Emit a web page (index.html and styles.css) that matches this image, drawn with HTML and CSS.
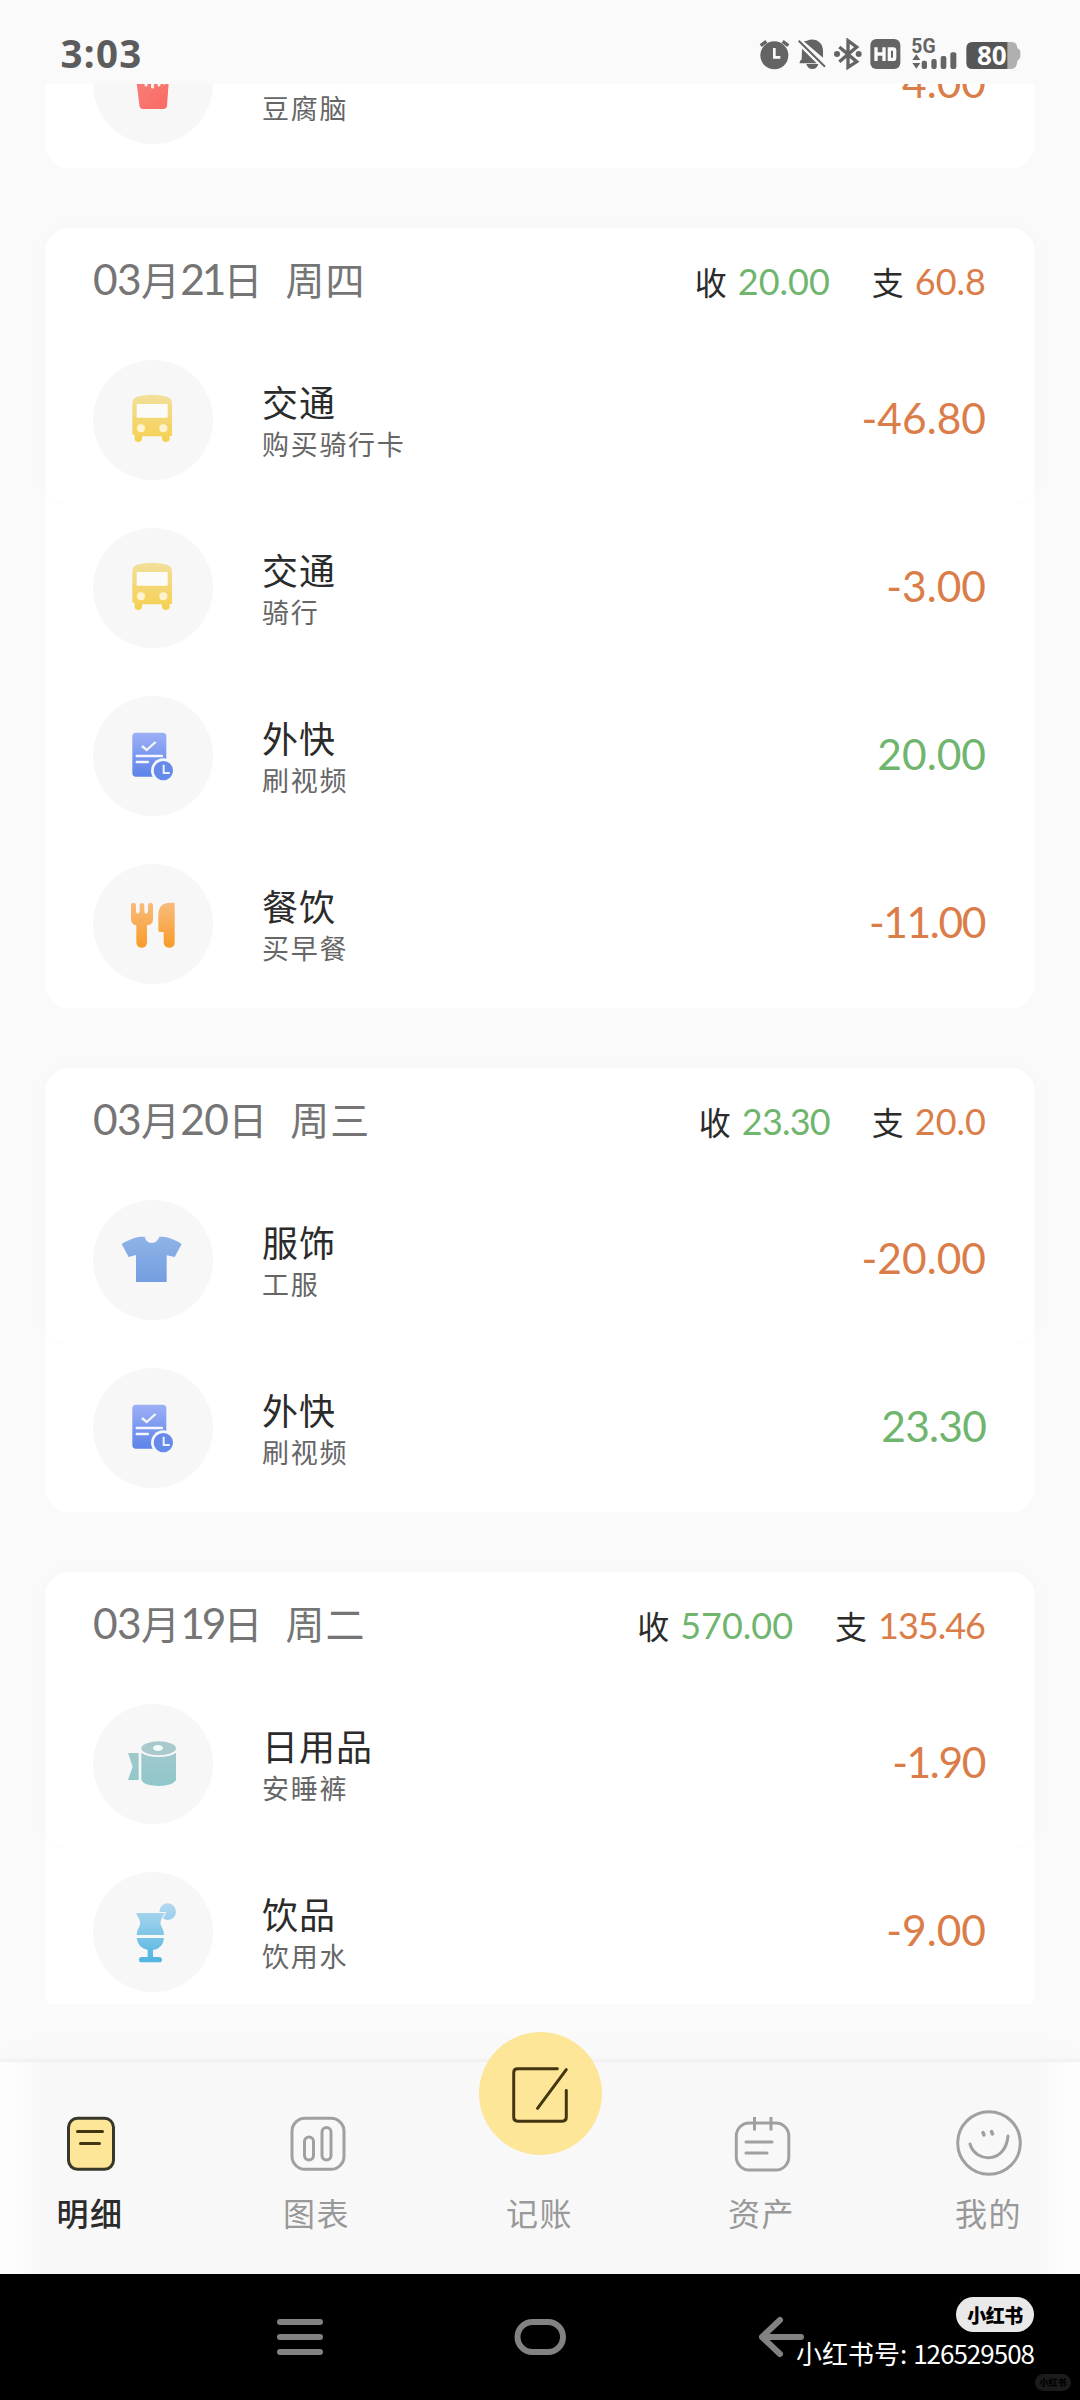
FILE: index.html
```html
<!DOCTYPE html>
<html lang="zh-CN">
<head>
<meta charset="utf-8">
<title>明细</title>
<link rel="stylesheet" href="styles.css">
</head>
<body>
<svg class="defs" width="0" height="0" aria-hidden="true">
  <defs>
    <linearGradient id="gBus" x1="0" y1="0" x2="0" y2="1"><stop offset="0" stop-color="#f3df9b"/><stop offset="1" stop-color="#f5d04f"/></linearGradient>
    <linearGradient id="gBlue" x1="0" y1="0" x2="0" y2="1"><stop offset="0" stop-color="#9db0f5"/><stop offset="1" stop-color="#5c82ea"/></linearGradient>
    <linearGradient id="gFood" gradientUnits="userSpaceOnUse" x1="0" y1="660" x2="0" y2="802"><stop offset="0" stop-color="#f8bd80"/><stop offset="1" stop-color="#f99b26"/></linearGradient>
    <linearGradient id="gShirt" x1="0" y1="0" x2="0" y2="1"><stop offset="0" stop-color="#8fb3e8"/><stop offset="1" stop-color="#749ee0"/></linearGradient>
    <linearGradient id="gRoll" gradientUnits="userSpaceOnUse" x1="0" y1="543" x2="0" y2="680"><stop offset="0" stop-color="#a5c9cd"/><stop offset="1" stop-color="#8fc7ca"/></linearGradient>
    <linearGradient id="gCup" gradientUnits="userSpaceOnUse" x1="0" y1="1030" x2="0" y2="1208"><stop offset="0" stop-color="#b5d9ef"/><stop offset="1" stop-color="#4eb4e0"/></linearGradient>
    <linearGradient id="gFries" x1="0" y1="0" x2="1" y2="1"><stop offset="0" stop-color="#f5807a"/><stop offset="1" stop-color="#fb6a62"/></linearGradient>
    <symbol id="bus" viewBox="160 60 360 360">
      <path fill="url(#gBus)" d="M278 190Q278 175 292 170Q337 159 382 170Q397 175 397 190V288H390V298Q388 306 379 306Q369 306 367 298V289H307V298Q305 306 296 306Q286 306 285 298V286L278 282Z"/>
      <rect x="291" y="192" width="93" height="41" rx="3" fill="#fbfbfa"/>
      <circle cx="304" cy="265" r="12" fill="#fdf4cf"/><circle cx="371" cy="265" r="12" fill="#fdf4cf"/>
    </symbol>
    <symbol id="task" viewBox="160 46 360 360">
      <rect x="278" y="156" width="102" height="132" rx="11" fill="url(#gBlue)"/>
      <path fill="none" stroke="#f4f6fd" stroke-width="7" d="M307 196L321 208L348 184"/>
      <path fill="none" stroke="#f4f6fd" stroke-width="7" stroke-linecap="round" d="M291 226H367M291 244H325"/>
      <circle cx="371" cy="270" r="37" fill="#f7f7f7"/><circle cx="371" cy="270" r="29" fill="#668ae9"/>
      <path fill="none" stroke="#eef2fe" stroke-width="6" d="M372 252V277H390"/>
    </symbol>
    <symbol id="food" viewBox="160 550 360 360">
      <path fill="url(#gFood)" d="M274 672Q275 666 281 666Q288 666 289 673V691Q289 699 295 699Q300 698 300 691V673Q301 667 307 667Q313 667 314 673V691Q314 699 319 699Q324 699 325 691V673Q326 666 333 666Q340 667 340 674V715Q340 733 322 734V784Q322 801 306 801Q290 801 290 784V734Q274 732 274 714ZM356 699Q358 666 393 666H405V786Q404 801 388 801Q373 801 372 785V754H360Q356 754 356 749Z"/>
    </symbol>
    <symbol id="shirt" viewBox="160 420 360 360">
      <path fill="url(#gShirt)" d="M246 552Q272 535 300 530H315Q320 549 337 549Q353 548 359 530H372Q402 535 426 552L405 591L381 586V666H289V585L267 591Z"/>
    </symbol>
    <symbol id="roll" viewBox="160 432 360 360">
      <path fill="url(#gRoll)" d="M265 579H297V660H265L279 620ZM305 578Q323 591 357 591Q391 591 409 578V661Q397 678 357 678Q315 678 305 661Z"/>
      <ellipse cx="357" cy="565" rx="52" ry="21" fill="#a9cacd"/><ellipse cx="355" cy="564" rx="15" ry="9" fill="#f4fbfb"/>
    </symbol>
    <symbol id="cup" viewBox="160 936 360 360">
      <circle cx="384" cy="1055" r="25" fill="url(#gCup)"/>
      <path fill="url(#gCup)" stroke="#f7f7f7" stroke-width="6" paint-order="stroke" d="M290 1059H375Q371 1068 365 1077Q359 1092 366 1100Q372 1110 373 1125H291Q292 1108 300 1097Q304 1088 298 1076Q292 1068 290 1059Z"/>
      <path fill="url(#gCup)" d="M291 1134H373Q370 1166 340 1170V1191H358Q367 1191 367 1199Q367 1207 358 1207H306Q298 1207 298 1199Q298 1191 306 1191H324V1170Q294 1163 291 1134Z"/>
    </symbol>
    <symbol id="fries" viewBox="0 0 120 120">
      <path fill="url(#gFries)" d="M43 54H76L74 82Q73.500 85 70 85H50Q47 85 46.500 82Z"/>
      <path fill="none" stroke="#faf0ea" stroke-width="3" stroke-linecap="round" d="M53 54V61M59.500 54V63M66 54V61M71 54V59"/>
    </symbol>
  </defs>
</svg>

<div class="screen">
  <header class="status">
    <span class="clock">3:03</span>
    <svg class="status-icons" viewBox="176 114 788 96">
      <g fill="#646464">
        <circle cx="222" cy="166" r="42"/>
        <path fill="none" stroke="#646464" stroke-width="10" d="M181 137L198 124M247 124L264 137"/>
        <path fill="none" stroke="#fafafa" stroke-width="8" d="M222 144V172H240"/>
        <path d="M305 146L349 190H298Q296 185 304 178ZM318 123Q342 112 359 128Q368 137 368 154V173L310 124ZM318 192H354Q350 207 336 207Q322 207 318 192Z"/>
        <path stroke="#646464" stroke-width="6" d="M295 122L374 200"/>
        <path fill="none" stroke="#646464" stroke-width="10" d="M417 141L469 185L443 202V122L469 141L417 185"/>
        <circle cx="410" cy="162" r="9"/><circle cx="475" cy="162" r="9"/>
        <rect x="510" y="117" width="90" height="90" rx="18"/>
        <path fill="none" stroke="#fafafa" stroke-width="10" d="M527 142V183M551 142V183M527 162H551M567 147H579Q583 147 583 152V173Q583 178 579 178H567Z"/>
        <path d="M636 180L648 163L660 180ZM636 189L648 206L660 189Z"/>
        <rect x="664" y="182" width="16" height="25" rx="6"/><rect x="693" y="177" width="16" height="30" rx="6"/><rect x="721" y="168" width="17" height="39" rx="6"/><rect x="750" y="157" width="18" height="50" rx="6"/>
        <path fill="#b0b0b0" d="M920 126H934Q950 126 951 145Q960 148 960 158V170Q959 178 951 182Q950 207 932 207H920Z"/>
        <path fill="#565656" d="M817 126H921V207H817Q798 207 798 188V145Q798 126 817 126Z"/>
      </g>
      <text x="633" y="159" class="net">5G</text>
      <text x="830" y="194" class="level">80</text>
    </svg>
  </header>

  <main class="list">
    <section class="day">
      <div class="row"><div class="icon"><svg><use href="#fries"/></svg></div><div class="info"><div class="note only">豆腐脑</div></div><div class="amount out">4.00</div></div>
    </section>

    <section class="day">
      <div class="head">
        <div class="top"><div class="date"><b>03</b>月<b class="narrow">21</b>日<span>周四</span></div><div class="sum">收<em class="in">20.00</em>支<em class="out">60.8</em></div></div>
        <div class="row"><div class="icon"><svg><use href="#bus"/></svg></div><div class="info"><div class="name">交通</div><div class="note">购买骑行卡</div></div><div class="amount out">-46.80</div></div>
      </div>
      <div class="row"><div class="icon"><svg><use href="#bus"/></svg></div><div class="info"><div class="name">交通</div><div class="note">骑行</div></div><div class="amount out">-3.00</div></div>
      <div class="row"><div class="icon"><svg><use href="#task"/></svg></div><div class="info"><div class="name">外快</div><div class="note">刷视频</div></div><div class="amount in">20.00</div></div>
      <div class="row"><div class="icon"><svg><use href="#food"/></svg></div><div class="info"><div class="name">餐饮</div><div class="note">买早餐</div></div><div class="amount out ones">-11.00</div></div>
    </section>

    <section class="day">
      <div class="head">
        <div class="top"><div class="date"><b>03</b>月<b>20</b>日<span>周三</span></div><div class="sum">收<em class="in tight">23.30</em>支<em class="out">20.0</em></div></div>
        <div class="row"><div class="icon"><svg><use href="#shirt"/></svg></div><div class="info"><div class="name">服饰</div><div class="note">工服</div></div><div class="amount out">-20.00</div></div>
      </div>
      <div class="row"><div class="icon"><svg><use href="#task"/></svg></div><div class="info"><div class="name">外快</div><div class="note">刷视频</div></div><div class="amount in tight">23.30</div></div>
    </section>

    <section class="day">
      <div class="head">
        <div class="top"><div class="date"><b>03</b>月<b class="narrow">19</b>日<span>周二</span></div><div class="sum">收<em class="in">570.00</em>支<em class="out tight">135.46</em></div></div>
        <div class="row"><div class="icon"><svg><use href="#roll"/></svg></div><div class="info"><div class="name">日用品</div><div class="note">安睡裤</div></div><div class="amount out ones">-1.90</div></div>
      </div>
      <div class="row"><div class="icon"><svg><use href="#cup"/></svg></div><div class="info"><div class="name">饮品</div><div class="note">饮用水</div></div><div class="amount out">-9.00</div></div>
    </section>
  </main>

  <nav class="tabs">
    <a class="tab active">
      <svg viewBox="0 0 66 68"><rect x="11.500" y="9.300" width="45" height="51" rx="9" fill="#fde698" stroke="#38382a" stroke-width="3"/><path stroke="#423611" stroke-width="3" stroke-linecap="round" d="M20.500 22.500H45.500M23.500 34.500H42.500"/></svg>
      <span>明细</span>
    </a>
    <a class="tab">
      <svg viewBox="0 0 66 68" fill="none" stroke="#a0a0a0" stroke-width="3"><rect x="8" y="9.300" width="52" height="51" rx="13"/><rect x="20.500" y="28" width="9" height="23" rx="4.500"/><rect x="38" y="18.500" width="9" height="32.500" rx="4.500"/></svg>
      <span>图表</span>
    </a>
    <a class="tab">
      <div class="fab"><svg viewBox="0 0 124 124" fill="none" stroke="#423611" stroke-width="3" stroke-linecap="round" stroke-linejoin="round"><path d="M79 37H39Q35 37 35 41V86Q35 90 39 90H84Q88 90 88 86V59M88 38L59 77"/></svg></div>
      <span>记账</span>
    </a>
    <a class="tab">
      <svg viewBox="0 0 66 68" fill="none" stroke="#a0a0a0" stroke-width="3"><rect x="7.300" y="14" width="52.500" height="47" rx="13"/><path d="M25.500 8V21.500M42 8V21.500"/><path stroke-linecap="round" d="M17 33H43M17 44H38"/></svg>
      <span>资产</span>
    </a>
    <a class="tab">
      <svg viewBox="0 0 66 68" fill="none" stroke="#a0a0a0" stroke-width="3" stroke-linecap="round"><circle cx="33" cy="34" r="31.300"/><path d="M14 35C19.500 54 49.500 55 52 27"/><path stroke-width="3.500" d="M27 23.500L28 26M35.500 22.500L36.500 25"/></svg>
      <span>我的</span>
    </a>
  </nav>

  <footer class="system">
    <svg viewBox="0 0 1080 126" fill="none" stroke="#828282" stroke-width="6" stroke-linecap="round" stroke-linejoin="round">
      <path d="M280 48H320M280 63H320M280 78H320"/>
      <rect x="517.500" y="48" width="45.500" height="30" rx="15"/>
      <path d="M801 63H762M780 46L762 63L780 80"/>
    </svg>
    <div class="mark"><span class="badge">小红书</span><span class="uid">小红书号: <b>126529508</b></span></div>
    <span class="badge ghost">小红书</span>
  </footer>
</div>
</body>
</html>
```
FILE: styles.css
```css
* { box-sizing: border-box; }
body {
  margin: 0;
  font-family: "Noto Sans CJK SC", sans-serif;
  background: #fafafa;
}
.defs { display: block; position: absolute; }
em { font-style: normal; }
.screen {
  display: flex;
  flex-direction: column;
  width: 1080px;
  height: 2400px;
  overflow: hidden;
}
.status {
  display: flex;
  justify-content: space-between;
  height: 84px;
  padding: 38px 58.700px 0 60.500px;
}
.clock {
  font: 700 38.500px/31px "Noto Sans", sans-serif;
  letter-spacing: 1.300px;
  color: #5c5c5c;
}
.status-icons { width: 262.700px; height: 32px; }
.net { font: 700 58px "Roboto", sans-serif; fill: #646464; }
.level { font: 700 78px "Noto Sans", sans-serif; fill: #fff; }

/* transaction list */
.list {
  display: flex;
  flex-direction: column;
  gap: 60px;
  height: 1920px;
  padding: 0 45px;
  overflow: hidden;
}
.day { flex: none; background: #fff; border-radius: 24px; }
.day:first-child { margin-top: -84px; }
.head {
  border-radius: 24px;
  background: #fff;
  box-shadow: 0 0 24px rgba(0, 0, 0, .022);
}
.top {
  display: flex;
  justify-content: space-between;
  align-items: center;
  height: 108px;
  padding: 0 49px 0 48px;
}
.date {
  margin-top: -7px;
  font-size: 39px;
  line-height: 60px;
  color: #757575;
  white-space: nowrap;
}
.date b { font: 400 42.500px/60px Lato, sans-serif; letter-spacing: -.6px; }
.date .narrow { letter-spacing: -3px; margin-right: 0; }
.date span { margin-left: 23px; letter-spacing: 1px; }
.sum { font-size: 32px; line-height: 60px; color: #2b2b2b; white-space: nowrap; margin-top: -2px; }
.sum em { font: 400 36px/60px Lato, sans-serif; margin-left: 11px; }
.sum em.in { margin-right: 42px; }
.sum em.tight { letter-spacing: -.8px; }
.sum em.out.tight { letter-spacing: -1px; margin-right: 1px; }
.in, .sum .in { color: #70b56e; }
.out, .sum .out { color: #da7d49; }
.row {
  display: flex;
  align-items: center;
  height: 168px;
  padding: 0 49px 0 48px;
}
.head + .row { background: #fff; }
.head + .row:last-child { border-radius: 0 0 24px 24px; }
.icon {
  width: 120px;
  height: 120px;
  border-radius: 50%;
  background: #f7f7f7;
}
.icon svg { display: block; width: 120px; height: 120px; }
.info { flex: 1; padding: 6px 0 0 49px; }
.name { font-size: 36px; line-height: 42px; letter-spacing: 1px; color: #2b2b2b; }
.note { font-size: 27px; line-height: 44px; letter-spacing: 1.700px; color: #666; }
.note.only { margin-top: 42px; }
.amount { margin-top: -5px; font: 400 42.500px/60px Lato, sans-serif; }
.amount.tight { letter-spacing: -.8px; }
.amount.ones { letter-spacing: -1.400px; margin-right: 1px; }

/* bottom tabs */
.tabs {
  display: grid;
  grid-template-columns: 226.500px 223px 222px 227px 66px;
  height: 212px;
  margin-top: 58px;
  padding: 47px 0 0 57px;
  background: linear-gradient(90deg, #fefefe 0, #f8f8f8 42px, #f8f8f8 1038px, #fefefe 1080px);
  box-shadow: 0 -2px 4px rgba(0, 0, 0, .045), 0 -16px 40px rgba(0, 0, 0, .012);
}
.tab { display: flex; flex-direction: column; align-items: center; width: 66px; }
.tab > svg { width: 66px; height: 68px; flex: none; }
.tab span {
  margin-top: 13px;
  font-size: 32px;
  line-height: 44px;
  letter-spacing: 1.500px;
  white-space: nowrap;
  color: #999;
}
.tab.active span { color: #2b2b2b; font-weight: 500; }
.fab {
  flex: none;
  width: 123px;
  height: 123px;
  margin: -77px 0 22px 2px;
  border-radius: 50%;
  background: #fde698;
}
.fab svg { display: block; width: 123px; height: 123px; }

/* system navigation and account mark */
.system { position: relative; height: 126px; background: #000; }
.system > svg { display: block; width: 1080px; height: 126px; }
.mark {
  position: absolute;
  right: 46px;
  top: 23px;
  display: flex;
  flex-direction: column;
  align-items: flex-end;
}
.badge {
  display: flex;
  align-items: center;
  justify-content: center;
  width: 78px;
  height: 35px;
  border-radius: 18px;
  background: #e9e9e9;
  color: #000;
  font-size: 19px;
  font-weight: 900;
  letter-spacing: -.5px;
}
.uid { margin-top: 2px; font-size: 26px; line-height: 38px; color: #fff; white-space: nowrap; }
.uid b { font-weight: 400; letter-spacing: -1px; }
.ghost {
  position: absolute;
  right: 9px;
  top: 100px;
  width: 36px;
  height: 17px;
  background: #1b1b1b;
  font-size: 9px;
  letter-spacing: 0;
}
```
